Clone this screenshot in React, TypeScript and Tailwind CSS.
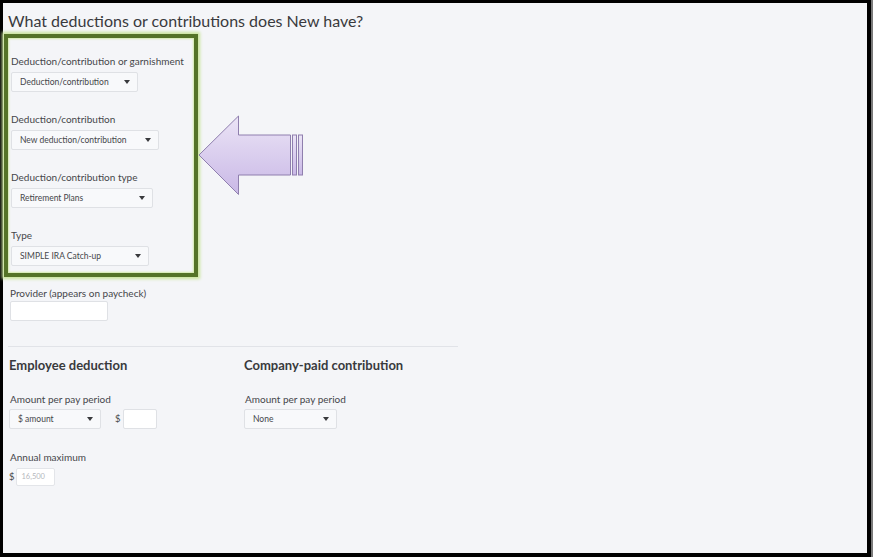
import React from 'react';

function Select({ value, width }: { value: string; width: string }) {
  return (
    <div
      className={`${width} h-[20px] flex items-center justify-between bg-[#f8f9fb] border border-[#dfe1e5] rounded-[2px] pl-[8px] pr-[7px]`}
    >
      <span className="text-[8.5px] text-[#45464a]">{value}</span>
      <svg width="6" height="4" viewBox="0 0 6 4">
        <path d="M0 0 L6 0 L3 4 Z" fill="#393a3d" />
      </svg>
    </div>
  );
}

function Label({ children }: { children: React.ReactNode }) {
  return <div className="text-[10px] leading-[12px] text-[#45464a]">{children}</div>;
}

function Arrow() {
  return (
    <svg className="absolute left-[194px] top-[110px]" width="110" height="86" viewBox="194 110 110 86">
      <defs>
        <linearGradient id="arrowFill" x1="0" y1="0" x2="0" y2="1">
          <stop offset="0" stopColor="#ebe4f6" />
          <stop offset="1" stopColor="#c9b8e6" />
        </linearGradient>
      </defs>
      <path
        d="M196 152 L235.5 113 L235.5 132 L287.5 132 L287.5 172 L235.5 172 L235.5 191.5 Z"
        fill="url(#arrowFill)"
        stroke="#8f7fae"
        strokeWidth="1"
      />
      <rect x="289.5" y="132" width="4" height="40" fill="url(#arrowFill)" stroke="#8f7fae" strokeWidth="1" />
      <rect x="295.5" y="132" width="4" height="40" fill="url(#arrowFill)" stroke="#8f7fae" strokeWidth="1" />
    </svg>
  );
}

export default function App() {
  return (
    <div className="w-[873px] h-[557px] bg-black flex" style={{ fontFamily: 'Lato, "Open Sans", sans-serif' }}>
      <div className="relative mt-[3px] ml-[3px] w-[864px] h-[550px] bg-[#f4f5f8]">
        <div className="pl-[5px] pt-[8px] text-[16px] leading-[20px] text-[#393a3d]">
          What deductions or contributions does New have?
        </div>

        <div className="relative mt-[3px] ml-[1px] w-[194px] h-[243px] border-[4px] border-[#557328] shadow-[0_0_3px_2px_#c9e49a,inset_0_0_2px_1px_#d3eaa9]">
          <div className="pl-[3px] pt-[17px] flex flex-col">
            <Label>Deduction/contribution or garnishment</Label>
            <div className="mt-[5px]">
              <Select value="Deduction/contribution" width="w-[127px]" />
            </div>
            <div className="mt-[21px]">
              <Label>Deduction/contribution</Label>
            </div>
            <div className="mt-[5px]">
              <Select value="New deduction/contribution" width="w-[148px]" />
            </div>
            <div className="mt-[21px]">
              <Label>Deduction/contribution type</Label>
            </div>
            <div className="mt-[5px]">
              <Select value="Retirement Plans" width="w-[142px]" />
            </div>
            <div className="mt-[21px]">
              <Label>Type</Label>
            </div>
            <div className="mt-[5px]">
              <Select value="SIMPLE IRA Catch-up" width="w-[138px]" />
            </div>
          </div>
        </div>

        <div className="pl-[7px] mt-[10px]">
          <Label>Provider (appears on paycheck)</Label>
          <div className="mt-[2px] w-[98px] h-[20px] bg-white border border-[#dfe1e5] rounded-[2px]" />
        </div>

        <div className="ml-[5px] mt-[25px] w-[450px] border-t border-[#e1e3e8]" />

        <div className="flex mt-[10px]">
          <div className="w-[236px] pl-[6px]">
            <div className="text-[13px] leading-[16px] font-bold text-[#393a3d]">Employee deduction</div>
            <div className="mt-[20px] pl-[1px]">
              <Label>Amount per pay period</Label>
            </div>
            <div className="mt-[4px] flex items-center">
              <Select value="$ amount" width="w-[92px]" />
              <span className="ml-[14px] text-[9.5px] text-[#45464a]">$</span>
              <div className="ml-[2px] w-[34px] h-[20px] bg-white border border-[#dfe1e5] rounded-[2px]" />
            </div>
            <div className="mt-[22px] pl-[1px]">
              <Label>Annual maximum</Label>
            </div>
            <div className="mt-[5px] flex items-center">
              <span className="text-[9.5px] text-[#45464a]">$</span>
              <div className="ml-[1px] w-[39px] h-[18px] bg-white border border-[#e3e5e9] rounded-[2px] flex items-center pl-[5px] text-[7.5px] text-[#b5b7bc]">
                16,500
              </div>
            </div>
          </div>
          <div className="pl-[5px]">
            <div className="text-[13px] leading-[16px] font-bold text-[#393a3d]">Company-paid contribution</div>
            <div className="mt-[20px] pl-[1px]">
              <Label>Amount per pay period</Label>
            </div>
            <div className="mt-[4px]">
              <Select value="None" width="w-[93px]" />
            </div>
          </div>
        </div>

        <Arrow />
      </div>
      <div className="ml-[4px] w-[2px] h-full bg-[#7a7a7a]" />
    </div>
  );
}
